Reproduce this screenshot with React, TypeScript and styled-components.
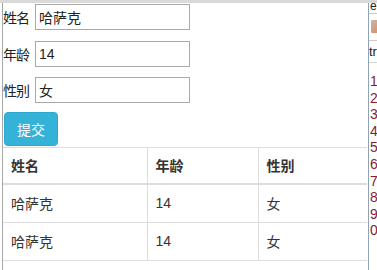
import React from "react";
import styled, { createGlobalStyle } from "styled-components";

const GlobalStyle = createGlobalStyle`
  body {
    margin: 0;
    background: #fff;
    font-family: "Liberation Sans", "Noto Sans CJK SC", sans-serif;
    font-size: 14px;
    color: #333;
  }
  * { box-sizing: border-box; }
`;

const rows = [
  { name: "哈萨克", age: "14", sex: "女" },
  { name: "哈萨克", age: "14", sex: "女" },
];

const fields = [
  { label: "姓名", value: "哈萨克" },
  { label: "年龄", value: "14" },
  { label: "性别", value: "女" },
];

export default function App() {
  return (
    <>
      <GlobalStyle />
      <Window>
        <Page>
          <Form>
            {fields.map((f) => (
              <Field key={f.label}>
                <Label>{f.label}</Label>
                <Input defaultValue={f.value} />
              </Field>
            ))}
            <Submit>提交</Submit>
          </Form>
          <Table>
            <thead>
              <tr>
                <Th>姓名</Th>
                <Th>年龄</Th>
                <Th>性别</Th>
              </tr>
            </thead>
            <tbody>
              {rows.map((r, i) => (
                <tr key={i}>
                  <Td>{r.name}</Td>
                  <Td>{r.age}</Td>
                  <Td>{r.sex}</Td>
                </tr>
              ))}
            </tbody>
          </Table>
        </Page>
        <Side>
          <SideHead>e</SideHead>
          <SideIcon>
            <IconBox />
          </SideIcon>
          <SideTag>tr</SideTag>
          <Lines>
            {["1", "2", "3", "4", "5", "6", "7", "8", "9", "0"].map((n) => (
              <LineNo key={n}>{n}</LineNo>
            ))}
          </Lines>
        </Side>
      </Window>
    </>
  );
}

const Window = styled.div`
  display: flex;
  width: 377px;
  height: 270px;
  overflow: hidden;
  border-top: 3px solid #d9d9d9;
  padding-left: 2px;
`;

const Page = styled.div`
  width: 366px;
  border-left: 1px solid #a7a7a7;
  display: flex;
  flex-direction: column;
`;

const Form = styled.div`
  display: flex;
  flex-direction: column;
  padding-top: 1px;
`;

const Field = styled.div`
  display: flex;
  align-items: center;
  height: 26px;
  margin-bottom: 10.5px;
`;

const Label = styled.span`
  font-family: "Noto Sans CJK SC", sans-serif;
  font-size: 14px;
  color: #222;
  width: 32px;
  letter-spacing: -1px;
`;

const Input = styled.input`
  width: 155px;
  height: 26px;
  border: 1px solid #a9a9a9;
  padding: 0 3px;
  font-family: "Liberation Sans", "Noto Sans CJK SC", sans-serif;
  font-size: 14px;
  color: #222;
  outline: none;
`;

const Submit = styled.button`
  align-self: flex-start;
  width: 54px;
  height: 34px;
  margin-top: -2px;
  margin-left: 1px;
  background: #35b2d8;
  border: 1px solid #2aa8cf;
  border-radius: 4px;
  color: #fff;
  font-family: "Noto Sans CJK SC", sans-serif;
  font-size: 14px;
  padding: 0;
`;

const Table = styled.table`
  width: 364px;
  border-collapse: collapse;
  margin-top: 1px;
  font-family: "Liberation Sans", "Noto Sans CJK SC", sans-serif;
  font-size: 14px;
  & th:first-child, & td:first-child {
    width: 144px;
    border-left: none;
  }
  & th:nth-child(2), & td:nth-child(2) {
    width: 111px;
  }
  & th:last-child, & td:last-child {
    border-right: none;
  }
`;

const Th = styled.th`
  text-align: left;
  font-weight: bold;
  color: #333;
  height: 37px;
  padding: 0 8px;
  border: 1px solid #ddd;
  border-bottom: 2px solid #ddd;
`;

const Td = styled.td`
  height: 38px;
  padding: 0 8px;
  color: #333;
  border: 1px solid #ddd;
`;

const Side = styled.div`
  flex: 1;
  border-left: 1px solid #8ea3b8;
  margin-top: -3px;
  background: #fff;
  overflow: hidden;
  display: flex;
  flex-direction: column;
  font-family: "Liberation Sans", sans-serif;
  font-size: 12px;
`;

const SideHead = styled.div`
  flex-shrink: 0;
  height: 14px;
  line-height: 12px;
  padding-left: 1px;
  color: #222;
  border-bottom: 1px solid #ccc;
`;

const SideIcon = styled.div`
  flex-shrink: 0;
  height: 27px;
  padding: 6px 0 0 2px;
  border-bottom: 1px solid #ccc;
`;

const IconBox = styled.div`
  width: 10px;
  height: 13px;
  background: linear-gradient(135deg, #c9b7aa, #d98a66);
  border-radius: 1px;
`;

const SideTag = styled.div`
  flex-shrink: 0;
  height: 22px;
  line-height: 22px;
  color: #222;
  font-size: 13px;
  border-bottom: 1px solid #d5d5d5;
`;

const Lines = styled.div`
  flex-shrink: 0;
  padding-top: 10px;
  display: flex;
  flex-direction: column;
`;

const LineNo = styled.div`
  flex-shrink: 0;
  height: 16.6px;
  line-height: 16px;
  color: #8b1a2e;
  font-size: 14px;
  padding-left: 1px;
`;
